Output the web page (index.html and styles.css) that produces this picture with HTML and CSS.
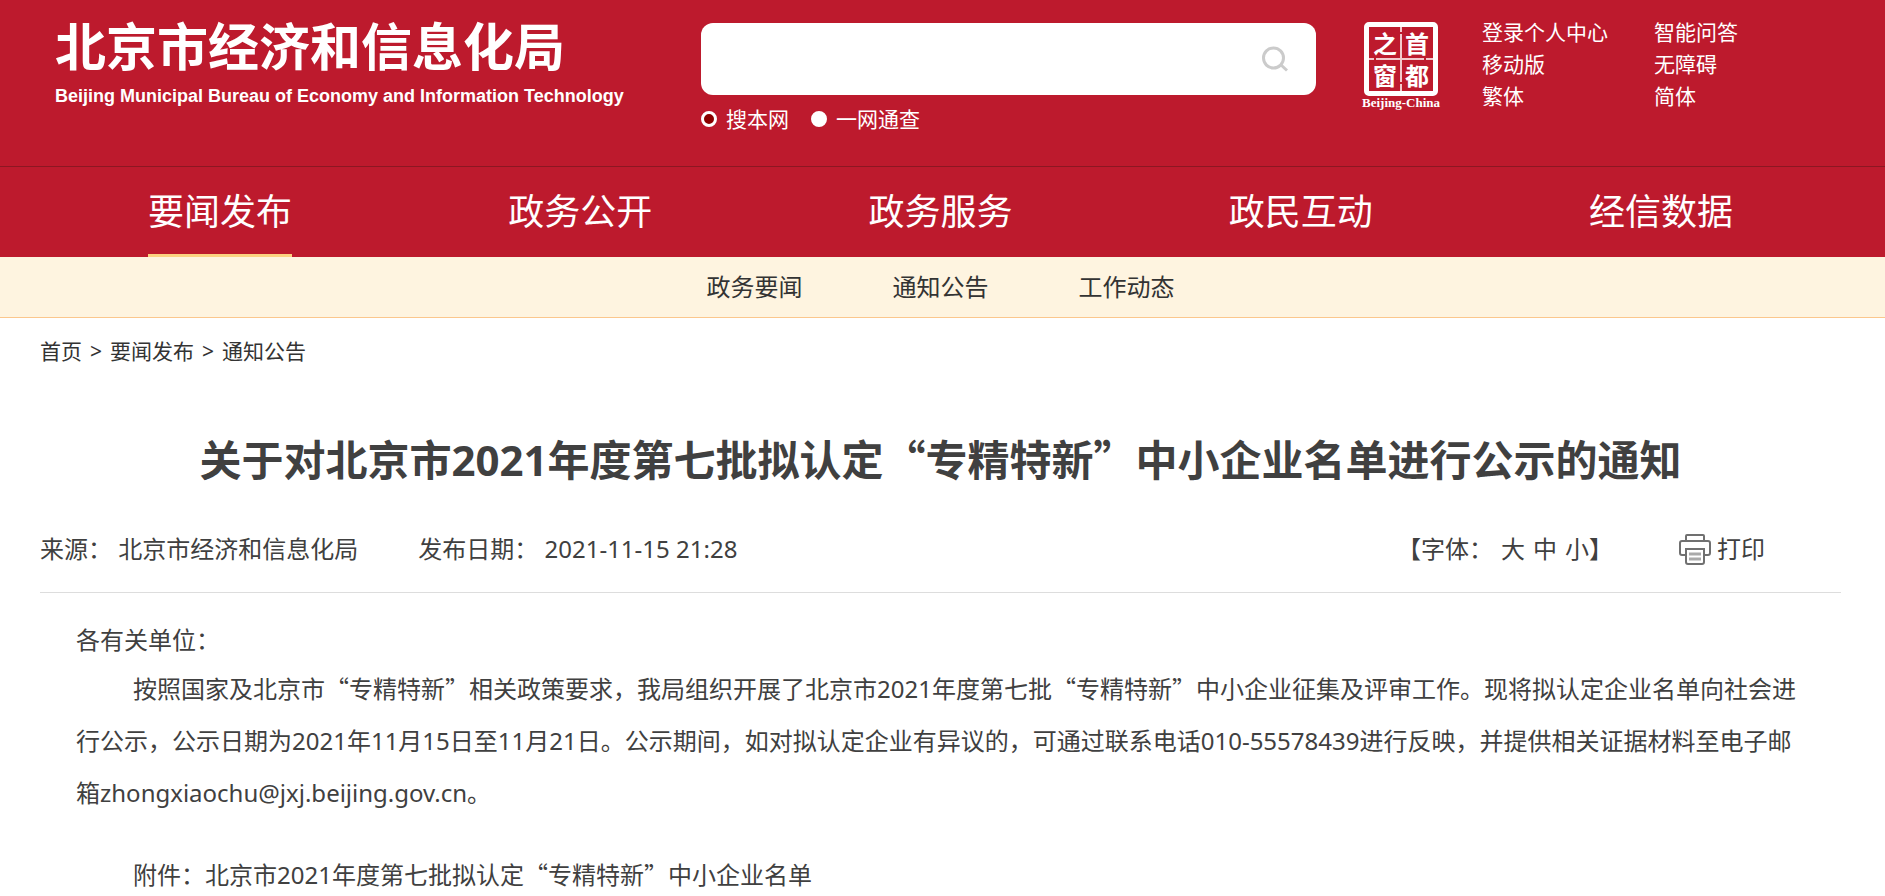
FILE: index.html
```html
<!DOCTYPE html>
<html lang="zh-CN">
<head>
<meta charset="utf-8">
<meta name="viewport" content="width=device-width, initial-scale=1">
<title>北京市经济和信息化局</title>
<link rel="stylesheet" href="styles.css">
</head>
<body>
<header class="site-header">
  <div class="container header-row">
    <a class="brand" href="#">
      <span class="brand-cn">北京市经济和信息化局</span>
      <span class="brand-en">Beijing Municipal Bureau of Economy and Information Technology</span>
    </a>
    <form class="search">
      <div class="search-box">
        <input class="search-input" type="text" aria-label="搜索">
        <button class="search-button" type="button" aria-label="搜索">
          <svg width="28" height="26" viewBox="0 0 28 26" fill="none" stroke="#cbcbcb" stroke-width="3"><circle cx="12.500" cy="12" r="10"/><path d="M19.500 18.500 26 24.500"/></svg>
        </button>
      </div>
      <div class="scope">
        <label class="scope-item"><input class="scope-radio" type="radio" name="scope" checked>搜本网</label>
        <label class="scope-item"><input class="scope-radio" type="radio" name="scope">一网通查</label>
      </div>
    </form>
    <a class="seal" href="#">
      <span class="seal-frame">
        <svg class="seal-lines" viewBox="0 0 64 64" stroke="#f3c9ce" stroke-width="2"><path d="M32 0v5M32 7v48M32 57v7M0 32h5M7 32h48M57 32h7"/></svg>
        <span class="seal-char">之</span><span class="seal-char">首</span>
        <span class="seal-char">窗</span><span class="seal-char">都</span>
      </span>
      <span class="seal-caption">Beijing-China</span>
    </a>
    <nav class="tools" aria-label="工具">
      <a href="#">登录个人中心</a><a href="#">智能问答</a>
      <a href="#">移动版</a><a href="#">无障碍</a>
      <a href="#">繁体</a><a href="#">简体</a>
    </nav>
  </div>
  <nav class="main-nav" aria-label="主导航">
    <div class="container main-nav-row">
      <a class="active" href="#">要闻发布</a>
      <a href="#">政务公开</a>
      <a href="#">政务服务</a>
      <a href="#">政民互动</a>
      <a href="#">经信数据</a>
    </div>
  </nav>
</header>
<nav class="sub-nav" aria-label="子导航">
  <div class="container sub-nav-row">
    <a href="#">政务要闻</a>
    <a href="#">通知公告</a>
    <a href="#">工作动态</a>
  </div>
</nav>
<main class="container">
  <nav class="breadcrumb" aria-label="当前位置">
    <a href="#">首页</a><span>&gt;</span><a href="#">要闻发布</a><span>&gt;</span><a href="#">通知公告</a>
  </nav>
  <article>
    <h1 class="title">关于对北京市2021年度第七批拟认定<span class="q">“</span>专精特新<span class="q">”</span>中小企业名单进行公示的通知</h1>
    <div class="meta">
      <span class="meta-item">来源： 北京市经济和信息化局</span>
      <span class="meta-item">发布日期： 2021-11-15 21:28</span>
      <div class="font-size">【字体：<span class="sizes"><button type="button">大</button><button type="button">中</button><button type="button">小</button></span>】</div>
      <button class="print" type="button">
        <svg width="32" height="32" viewBox="0 0 32 32" fill="none" stroke="#707070" stroke-width="2"><path d="M7 8V3q0-1 1-1h16q1 0 1 1v5"/><path d="M7 22H3q-2 0-2-2V10q0-2 2-2h26q2 0 2 2v10q0 2-2 2h-4"/><path d="M7 29V16h18v13q0 2-2 2H9q-2 0-2-2z"/><path d="M10 21h12M10 26h12" stroke="#a9a9a9" stroke-width="3"/></svg>
        打印
      </button>
    </div>
    <div class="content">
      <p class="salutation">各有关单位：</p>
      <p class="paragraph">按照国家及北京市<span class="q">“</span>专精特新<span class="q">”</span>相关政策要求，我局组织开展了北京市2021年度第七批<span class="q">“</span>专精特新<span class="q">”</span>中小企业征集及评审工作。现将拟认定企业名单向社会进行公示，公示日期为2021年11月15日至11月21日。公示期间，如对拟认定企业有异议的，可通过联系电话010-55578439进行反映，并提供相关证据材料至电子邮箱zhongxiaochu@jxj.beijing.gov.cn。</p>
      <p class="paragraph">附件：北京市2021年度第七批拟认定<span class="q">“</span>专精特新<span class="q">”</span>中小企业名单</p>
    </div>
  </article>
</main>
</body>
</html>
```
FILE: styles.css
```css
* { box-sizing: border-box; }

body {
  margin: 0;
  background: #fff;
  color: #404040;
  font-family: "Noto Sans", "Noto Sans CJK SC", sans-serif;
  font-size: 24px;
}

a { color: inherit; text-decoration: none; }

button {
  padding: 0;
  border: 0;
  background: none;
  color: inherit;
  font: inherit;
  cursor: pointer;
}

/* Full-width quotation marks */
.q { font-family: "Noto Sans CJK SC", sans-serif; line-height: 1; }

.container { padding: 0 44px 0 40px; }

/* Header */
.site-header { background: #bd1a2d; color: #fff; }

.header-row {
  display: flex;
  align-items: flex-start;
  height: 166px;
  padding: 0 44px 0 55px;
}

.brand {
  display: flex;
  flex-direction: column;
  width: 646px;
  padding-top: 14px;
  white-space: nowrap;
}

.brand-cn {
  font-family: "Noto Sans CJK SC", sans-serif;
  font-size: 51px;
  font-weight: 700;
  line-height: 60px;
}

.brand-en {
  padding-top: 10px;
  font-family: "Liberation Sans", sans-serif;
  font-size: 18px;
  font-weight: 700;
  line-height: 24px;
}

.search { flex: 0 1 615px; padding-top: 23px; }

.search-box {
  display: flex;
  align-items: center;
  height: 72px;
  padding-right: 27px;
  border-radius: 12px;
  background: #fff;
}

.search-input {
  flex: 1;
  min-width: 0;
  height: 100%;
  padding: 0 20px;
  border: 0;
  outline: 0;
  background: transparent;
  font: inherit;
}

.search-button { display: flex; }

.scope {
  display: flex;
  gap: 22px;
  padding-top: 8px;
  font-size: 21px;
  line-height: 32px;
}

.scope-item { display: flex; align-items: center; gap: 9px; }

.scope-radio {
  appearance: none;
  width: 16px;
  height: 16px;
  margin: 0;
  border: 3px solid #fff;
  border-radius: 50%;
  background: #fff;
}

.scope-radio:checked { background: #8b0000; }

.seal {
  display: flex;
  flex-direction: column;
  align-items: center;
  gap: 1px;
  margin-left: 46px;
  padding-top: 22px;
}

.seal-frame {
  position: relative;
  display: grid;
  grid-template-columns: 1fr 1fr;
  width: 74px;
  height: 74px;
  border: 5px solid #fff;
  border-radius: 5px;
}

.seal-lines { position: absolute; inset: 0; }

.seal-char {
  font-family: "Noto Sans CJK SC", sans-serif;
  font-size: 24px;
  font-weight: 700;
  line-height: 32px;
  text-align: center;
}

.seal-caption {
  font-family: "Liberation Serif", serif;
  font-size: 13px;
  font-weight: 700;
  line-height: 12px;
}

.tools {
  display: grid;
  grid-template-columns: 172px auto;
  margin-left: 42px;
  padding-top: 16px;
  font-size: 21px;
  line-height: 32px;
}

.main-nav { border-top: 1px solid #8c1722; }

.main-nav-row {
  display: grid;
  grid-template-columns: repeat(5, 1fr);
  justify-items: center;
  font-size: 36px;
  line-height: 90px;
}

.main-nav-row a { height: 90px; }
.main-nav-row .active { border-bottom: 3px solid #fcd281; }

.sub-nav { border-bottom: 1px solid #fbc78d; background: #fef4e0; }

.sub-nav-row {
  display: flex;
  justify-content: center;
  gap: 90px;
  color: #333;
  line-height: 60px;
}

/* Article */
.breadcrumb {
  display: flex;
  gap: 8px;
  padding-top: 17px;
  color: #333;
  font-size: 21px;
  line-height: 32px;
}

.title {
  margin: 0;
  padding: 61px 0 38px;
  font-size: 42px;
  font-weight: 700;
  line-height: 64px;
  text-align: center;
}

.meta {
  display: flex;
  align-items: center;
  height: 38px;
  line-height: 38px;
  white-space: nowrap;
}

.meta-item { margin-right: 60px; }

.font-size { display: flex; margin-left: auto; }
.sizes { display: flex; gap: 8px; padding-left: 8px; }

.print {
  display: flex;
  align-items: center;
  gap: 6px;
  margin: 0 76px 0 66px;
}

.content {
  margin-top: 24px;
  padding: 23px 36px 0;
  border-top: 1px solid #ddd;
}

.salutation { margin: 0; line-height: 47px; }

.paragraph {
  margin: 0 0 30px;
  line-height: 52px;
  text-indent: 57px;
}

.paragraph:last-child { margin-bottom: 0; }
```
